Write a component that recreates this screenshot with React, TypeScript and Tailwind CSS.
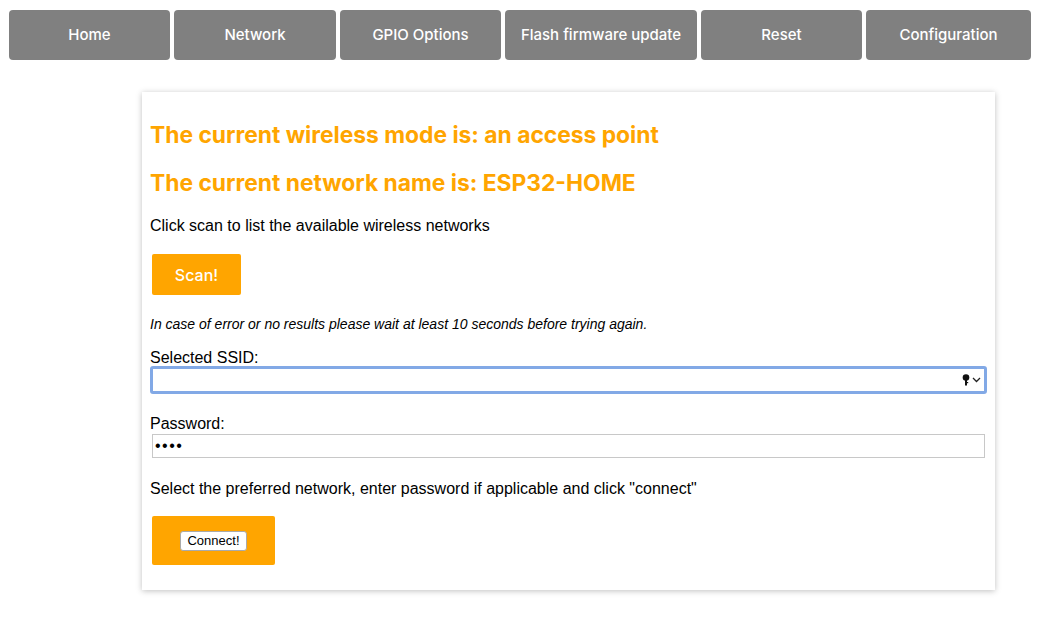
import React from "react";

const navItems: Array<{ label: string; width: string }> = [
  { label: "Home", width: "w-[161px]" },
  { label: "Network", width: "w-[162px]" },
  { label: "GPIO Options", width: "w-[161px]" },
  { label: "Flash firmware update", width: "w-[192px]" },
  { label: "Reset", width: "w-[161px]" },
  { label: "Configuration", width: "w-[165px]" },
];

function KeyIcon() {
  return (
    <svg width="8" height="12" viewBox="0 0 8 12" fill="#111">
      <circle cx="4" cy="3.5" r="3.3" />
      <rect x="3" y="5" width="2" height="6.5" />
      <rect x="4" y="8" width="2.2" height="1.2" />
    </svg>
  );
}

function Chevron() {
  return (
    <svg width="9" height="6" viewBox="0 0 9 6" fill="none" stroke="#222" strokeWidth="1.3">
      <path d="M1 1l3.5 3.5L8 1" />
    </svg>
  );
}

export default function App() {
  return (
    <div className="min-h-[621px] bg-white font-['Liberation_Sans',Arial,sans-serif] text-black">
      <nav className="flex gap-1 pl-[9px] pt-[10px]">
        {navItems.map((item) => (
          <div
            key={item.label}
            className={`${item.width} flex h-[50px] items-center justify-center rounded-[4px] bg-[#808080] pt-[1px] font-['Inter',sans-serif] text-[15px] font-medium text-white`}
          >
            {item.label}
          </div>
        ))}
      </nav>

      <div className="ml-[142px] mt-[32px] w-[853px] bg-white px-[8px] pb-[25px] pt-[30px] shadow-[0_1px_6px_rgba(0,0,0,0.25)]">
        <h2 className="font-['Inter',sans-serif] text-[22.8px] font-bold leading-[26px] text-[#ffa500]">
          The current wireless mode is: an access point
        </h2>
        <h2 className="mt-[22px] font-['Inter',sans-serif] text-[22.8px] font-bold leading-[26px] text-[#ffa500]">
          The current network name is: ESP32-HOME
        </h2>
        <p className="mt-[21px] text-[16px] leading-[18px]">Click scan to list the available wireless networks</p>

        <button className="ml-[2px] mt-[19px] flex h-[41px] w-[89px] items-center justify-center rounded-[2px] bg-[#ffa500] font-['Inter',sans-serif] text-[16px] font-medium text-white">
          Scan!
        </button>

        <p className="mt-[21px] text-[14px] italic leading-[16px]">
          In case of error or no results please wait at least 10 seconds before trying again.
        </p>

        <p className="mt-[17px] text-[16px] leading-[18px]">Selected SSID:</p>
        <div className="mt-[-1px] flex h-[28px] w-[837px] items-center justify-end gap-[2px] rounded-[3px] border-[3px] border-[#82a9e6] bg-white pr-[3px]">
          <KeyIcon />
          <Chevron />
        </div>

        <p className="mt-[21px] text-[16px] leading-[18px]">Password:</p>
        <div className="ml-[2px] mt-[1px] flex h-[24px] w-[833px] items-center border border-[#c8c8c8] bg-white pl-[2px] text-[16px] leading-none tracking-[1.5px]">
          ••••
        </div>

        <p className="mt-[22px] text-[16px] leading-[18px]">
          Select the preferred network, enter password if applicable and click "connect"
        </p>

        <div className="ml-[2px] mt-[18px] flex h-[49px] w-[123px] items-center justify-center rounded-[2px] bg-[#ffa500]">
          <button className="h-[20px] rounded-[3px] border border-[#aaa] bg-white px-[6px] text-[13px] leading-none text-black">
            Connect!
          </button>
        </div>
      </div>
    </div>
  );
}
